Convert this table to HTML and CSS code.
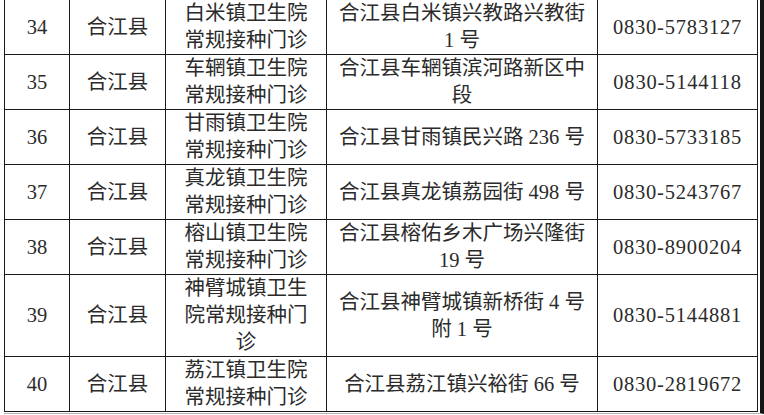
FILE: index.html
```html
<!DOCTYPE html>
<html lang="zh-CN">
<head>
<meta charset="utf-8">
<title>合江县常规接种门诊</title>
<link rel="stylesheet" href="styles.css">
</head>
<body>
<div class="sheet">
<table class="clinics">
  <colgroup>
    <col class="c-no"><col class="c-county"><col class="c-name"><col class="c-addr"><col class="c-tel">
  </colgroup>
  <tbody>
    <tr>
      <td>34</td><td>合江县</td>
      <td>白米镇卫生院<br>常规接种门诊</td>
      <td>合江县白米镇兴教路兴教街<br>1 号</td>
      <td class="tel">0830-5783127</td>
    </tr>
    <tr>
      <td>35</td><td>合江县</td>
      <td>车辋镇卫生院<br>常规接种门诊</td>
      <td>合江县车辋镇滨河路新区中<br>段</td>
      <td class="tel">0830-5144118</td>
    </tr>
    <tr>
      <td>36</td><td>合江县</td>
      <td>甘雨镇卫生院<br>常规接种门诊</td>
      <td>合江县甘雨镇民兴路 236 号</td>
      <td class="tel">0830-5733185</td>
    </tr>
    <tr>
      <td>37</td><td>合江县</td>
      <td>真龙镇卫生院<br>常规接种门诊</td>
      <td>合江县真龙镇荔园街 498 号</td>
      <td class="tel">0830-5243767</td>
    </tr>
    <tr>
      <td>38</td><td>合江县</td>
      <td>榕山镇卫生院<br>常规接种门诊</td>
      <td>合江县榕佑乡木广场兴隆街<br>19 号</td>
      <td class="tel">0830-8900204</td>
    </tr>
    <tr class="tall">
      <td>39</td><td>合江县</td>
      <td>神臂城镇卫生<br>院常规接种门<br>诊</td>
      <td>合江县神臂城镇新桥街 4 号<br>附 1 号</td>
      <td class="tel">0830-5144881</td>
    </tr>
    <tr>
      <td>40</td><td>合江县</td>
      <td>荔江镇卫生院<br>常规接种门诊</td>
      <td>合江县荔江镇兴裕街 66 号</td>
      <td class="tel">0830-2819672</td>
    </tr>
  </tbody>
</table>
</div>
</body>
</html>
```

FILE: styles.css
```css
html, body {
  margin: 0;
  padding: 0;
  background: #ffffff;
}

body {
  font-family: "Liberation Serif", "Noto Sans CJK SC", serif;
  color: #2b2b2b;
  overflow: hidden;
}

.sheet {
  width: max-content;
  margin-left: 4px;
  padding: 0 2px 1px 0;
  border-right: 4px solid #151515;
  border-bottom: 1px solid #b5b5b5;
}

.clinics {
  margin-top: -1px;
  border-collapse: collapse;
  table-layout: fixed;
  width: 753px;
  font-size: 20.5px;
  line-height: 27px;
}

.c-no { width: 65px; }
.c-county { width: 96px; }
.c-name { width: 161px; }
.c-addr { width: 271px; }
.c-tel { width: 160px; }

.clinics td {
  border: 1px solid #1a1a1a;
  padding: 0;
  height: 54px;
  text-align: center;
  vertical-align: middle;
  white-space: nowrap;
}

.clinics tr.tall td {
  height: 81px;
}

.clinics td.tel {
  letter-spacing: 0.8px;
}
```
